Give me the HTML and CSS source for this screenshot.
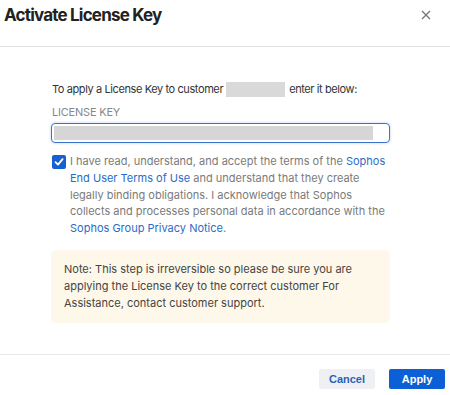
FILE: index.html
```html
<!DOCTYPE html>
<html>
<head>
<meta charset="utf-8">
<link rel="stylesheet" href="styles.css">
</head>
<body>
<div class="dialog">
  <div class="header">
    <h1 class="title">Activate License Key</h1>
    <span class="close" aria-label="Close">
      <svg width="10" height="10" viewBox="0 0 10 10"><path d="M1 1L9 9M9 1L1 9" stroke="#777" stroke-width="1.3" fill="none"/></svg>
    </span>
  </div>
  <div class="content">
    <p class="intro">To apply a License Key to customer <span class="redact"></span> enter it below:</p>
    <div class="label">LICENSE KEY</div>
    <div class="input"><span class="input-redact"></span></div>
    <div class="agree">
      <span class="checkbox">
        <svg width="10" height="10" viewBox="0 0 10 10"><path d="M1.5 5.2L4 7.6L8.6 2.2" stroke="#fff" stroke-width="1.8" fill="none" stroke-linecap="round" stroke-linejoin="round"/></svg>
      </span>
      <p class="agree-text">I have read, understand, and accept the terms of the <a class="link">Sophos End User Terms of Use</a> and understand that they create legally binding obligations. I acknowledge that Sophos collects and processes personal data in accordance with the <a class="link">Sophos Group Privacy Notice</a>.</p>
    </div>
    <div class="note">Note: This step is irreversible so please be sure you are applying the License Key to the correct customer For Assistance, contact customer support.</div>
  </div>
  <div class="footer">
    <button class="btn btn-cancel">Cancel</button>
    <button class="btn btn-apply">Apply</button>
  </div>
</div>
</body>
</html>
```
FILE: styles.css
```css
html, body {
  margin: 0;
  padding: 0;
  background: #fff;
}
body {
  font-family: Inter, "Noto Sans", sans-serif;
  width: 450px;
  height: 395px;
  overflow: hidden;
}
.dialog {
  display: flex;
  flex-direction: column;
  height: 395px;
}
.header {
  height: 47px;
  flex: none;
  box-sizing: border-box;
  border-bottom: 1px solid #e3e3e3;
  display: flex;
  align-items: flex-start;
  justify-content: space-between;
  padding: 5px 19px 0 4px;
}
.title {
  margin: 0;
  font-size: 17px;
  font-weight: 700;
  letter-spacing: -0.8px;
  color: #222;
  line-height: 20px;
}
.close {
  display: flex;
  margin-top: 5px;
}
.content {
  flex: 1;
  padding: 34px 60px 0 51px;
}
.intro {
  margin: 0 0 0 1px;
  font-size: 11px;
  letter-spacing: -0.4px;
  line-height: 16px;
  color: #333;
  display: flex;
  align-items: center;
  white-space: nowrap;
}
.redact {
  display: inline-block;
  width: 59px;
  height: 15px;
  background: #d9d9d9;
  margin: 0 4px 0 3px;
}
.label {
  margin: 7px 0 0 1px;
  font-size: 11px;
  letter-spacing: -0.2px;
  line-height: 16px;
  color: #888;
}
.input {
  margin-top: 3px;
  height: 20px;
  box-sizing: border-box;
  border: 1.5px solid #3b73cc;
  border-radius: 4px;
  box-shadow: 0 0 3px rgba(59, 115, 204, 0.35);
  padding: 2px 16px 2px 2px;
  display: flex;
}
.input-redact {
  flex: 1;
  background: #d6d6d6;
}
.agree {
  margin-top: 10px;
  display: flex;
  gap: 4px;
  padding-left: 1px;
}
.checkbox {
  flex: none;
  width: 14px;
  height: 14px;
  border-radius: 2px;
  background: #1760d2;
  display: flex;
  align-items: center;
  justify-content: center;
  margin-top: 2px;
}
.agree-text {
  margin: 0;
  font-size: 11px;
  line-height: 16.8px;
  color: #7a7a7a;
}
.link {
  color: #2a6bc9;
  text-decoration: none;
}
.note {
  margin-top: 13px;
  background: #fdf8e9;
  border-radius: 5px;
  padding: 11px 13px 11px 13px;
  font-size: 11px;
  line-height: 17px;
  color: #444;
}
.footer {
  flex: none;
  height: 41px;
  box-sizing: border-box;
  border-top: 1px solid #e8e8e8;
  display: flex;
  justify-content: flex-end;
  align-items: flex-start;
  gap: 14px;
  padding: 14px 5px 0 0;
}
.btn {
  font-family: "Liberation Sans", Arial, sans-serif;
  font-size: 11px;
  font-weight: 700;
  height: 20px;
  width: 56px;
  border: none;
  border-radius: 2px;
  padding: 0;
  cursor: pointer;
}
.btn-cancel {
  background: #eef0f3;
  color: #2a62b8;
}
.btn-apply {
  background: #0c5fd4;
  color: #fff;
}
```
